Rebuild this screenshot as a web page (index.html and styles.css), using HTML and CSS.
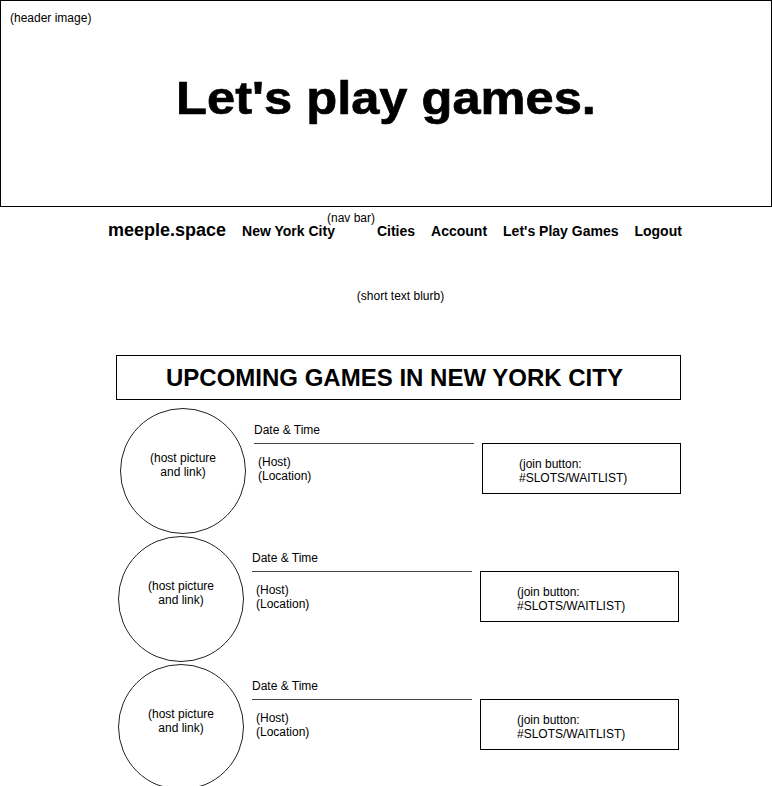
FILE: index.html
```html
<!DOCTYPE html>
<html lang="en">
<head>
<meta charset="utf-8">
<title>meeple.space</title>
<link rel="stylesheet" href="styles.css">
</head>
<body>
<header class="hero">
  <div class="note">(header image)</div>
  <h1 class="hero-title">Let's play games.</h1>
</header>

<nav class="nav">
  <span class="note nav-note">(nav bar)</span>
  <a class="brand" href="#">meeple.space</a>
  <a class="nav-link nav-city" href="#">New York City</a>
  <a class="nav-link" href="#">Cities</a>
  <a class="nav-link" href="#">Account</a>
  <a class="nav-link" href="#">Let's Play Games</a>
  <a class="nav-link" href="#">Logout</a>
</nav>

<p class="note blurb">(short text blurb)</p>

<section class="games">
  <h2 class="games-title">UPCOMING GAMES IN NEW YORK CITY</h2>

  <div class="game game-first">
    <div class="host-pic"><span>(host picture<br>and link)</span></div>
    <div class="when">Date &amp; Time</div>
    <div class="details">(Host)<br>(Location)</div>
    <div class="join"><span>(join button:<br>#SLOTS/WAITLIST)</span></div>
  </div>

  <div class="game">
    <div class="host-pic"><span>(host picture<br>and link)</span></div>
    <div class="when">Date &amp; Time</div>
    <div class="details">(Host)<br>(Location)</div>
    <div class="join"><span>(join button:<br>#SLOTS/WAITLIST)</span></div>
  </div>

  <div class="game">
    <div class="host-pic"><span>(host picture<br>and link)</span></div>
    <div class="when">Date &amp; Time</div>
    <div class="details">(Host)<br>(Location)</div>
    <div class="join"><span>(join button:<br>#SLOTS/WAITLIST)</span></div>
  </div>
</section>
</body>
</html>
```

FILE: styles.css
```css
* { box-sizing: border-box; }

html, body {
  margin: 0;
  padding: 0;
  background: #fff;
}

body {
  width: 772px;
  font-family: "Liberation Sans", Arial, Helvetica, sans-serif;
  color: #000;
  overflow: hidden;
}

.note {
  font-size: 12px;
  line-height: 14px;
  color: #000;
}

/* header */
.hero {
  height: 207px;
  border: 1px solid #000;
  padding: 10px 9px 0;
}

.hero-title {
  margin: 50px 0 0;
  font-size: 46px;
  line-height: 46px;
  font-weight: 700;
  text-align: center;
  transform: scaleX(1.1);
  -webkit-text-stroke: 0.7px #000;
}

/* nav */
.nav {
  position: relative;
  display: flex;
  align-items: baseline;
  gap: 16px;
  margin-top: 12px;
  padding-left: 108px;
  line-height: 22px;
}

.nav a {
  color: #000;
  text-decoration: none;
  font-weight: 700;
}

.brand {
  font-size: 18px;
}

.nav-link {
  font-size: 14px;
}

.nav-city {
  margin-right: 26px;
}

.nav-note {
  position: absolute;
  left: 327px;
  top: -8px;
}

/* blurb */
.blurb {
  margin: 47px 0 0;
  padding-left: 29px;
  text-align: center;
}

/* games */
.games {
  margin-top: 52px;
}

.games-title {
  margin: 0 0 0 116px;
  width: 565px;
  height: 45px;
  border: 1px solid #000;
  padding-right: 8px;
  font-size: 24px;
  line-height: 43px;
  font-weight: 700;
  text-align: center;
}

.game {
  display: grid;
  grid-template-columns: 126px 220px 199px;
  grid-template-rows: auto 1fr;
  column-gap: 8px;
  height: 126px;
  margin: 2px 0 0 118px;
  font-size: 12px;
  line-height: 14px;
}

.game-first {
  margin: 8px 0 0 120px;
}

.host-pic {
  grid-row: 1 / 3;
  grid-column: 1;
  width: 126px;
  height: 126px;
  border: 1px solid #222;
  border-radius: 50%;
  display: flex;
  align-items: center;
  justify-content: center;
  text-align: center;
  padding-bottom: 12px;
}

.when {
  grid-row: 1;
  grid-column: 2;
  padding-top: 15px;
  padding-bottom: 6px;
}

.details {
  grid-row: 2;
  grid-column: 2;
  border-top: 1px solid #444;
  padding: 11px 0 0 4px;
}

.join {
  grid-row: 2;
  grid-column: 3;
  align-self: start;
  height: 51px;
  border: 1px solid #000;
  display: flex;
  align-items: center;
  padding: 4px 0 0 36px;
}
```
